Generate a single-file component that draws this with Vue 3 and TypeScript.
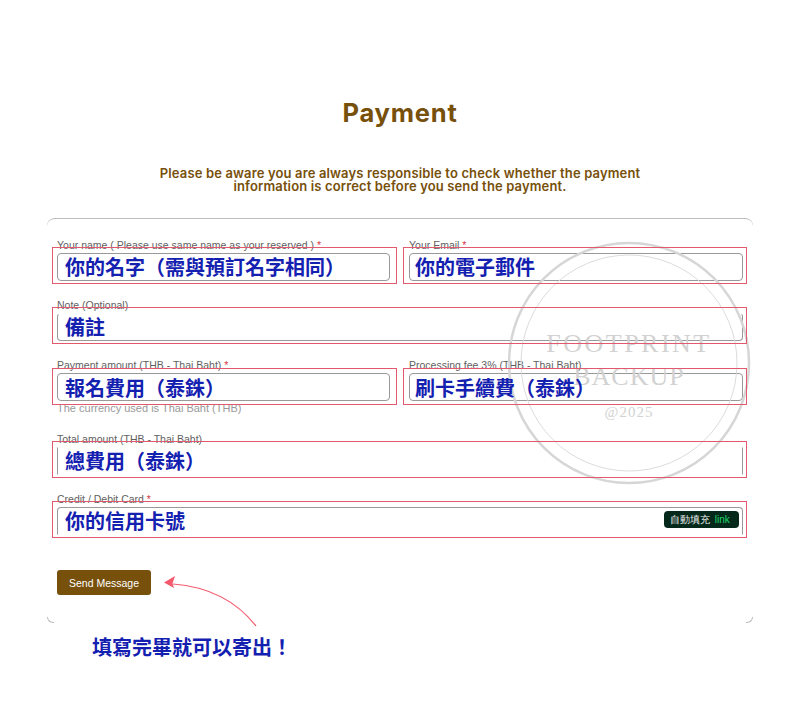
<script setup lang="ts">
type Field = {
  label: string;
  required?: boolean;
  hint: string;
  wide?: boolean;
  side?: 'left' | 'right';
  low?: boolean;
  borders?: string;
  help?: string;
  badge?: boolean;
};

const fields: Field[] = [
  { label: 'Your name ( Please use same name as your reserved )', required: true, hint: '你的名字（需與預訂名字相同）', side: 'left' },
  { label: 'Your Email', required: true, hint: '你的電子郵件', side: 'right' },
  { label: 'Note (Optional)', hint: '備註', wide: true, borders: 'no-top' },
  { label: 'Payment amount (THB - Thai Baht)', required: true, hint: '報名費用（泰銖）', side: 'left', low: true, help: 'The currency used is Thai Baht (THB)' },
  { label: 'Processing fee 3% (THB - Thai Baht)', hint: '刷卡手續費（泰銖）', side: 'right', low: true },
  { label: 'Total amount (THB - Thai Baht)', hint: '總費用（泰銖）', wide: true, borders: 'sides-only' },
  { label: 'Credit / Debit Card', required: true, hint: '你的信用卡號', wide: true, borders: 'no-bottom', badge: true },
];
</script>

<template>
  <div class="page">
    <h1>Payment</h1>
    <p class="notice">
      Please be aware you are always responsible to check whether the payment<br />
      information is correct before you send the payment.
    </p>

    <form class="card" @submit.prevent>
      <span class="corner corner-left"></span>
      <span class="corner corner-right"></span>

      <div class="grid">
        <div v-for="field in fields" :key="field.label" class="field" :class="{ wide: field.wide }">
          <label>{{ field.label }}<span v-if="field.required" class="req"> *</span></label>
          <div class="control">
            <input type="text" :class="field.borders" />
            <div class="annot" :class="[field.side, { low: field.low }]">{{ field.hint }}</div>
            <div v-if="field.badge" class="badge">自動填充 <span>link</span></div>
          </div>
          <small v-if="field.help">{{ field.help }}</small>
        </div>
      </div>

      <button type="submit">Send Message</button>
    </form>

    <p class="tip">填寫完畢就可以寄出！</p>

    <svg class="arrow" width="110" height="60" viewBox="0 0 110 60" fill="none">
      <path d="M101 51C83 28 57 12 18 9" stroke="#f4596c" stroke-width="1.2" />
      <path d="M9 7.500L20 1L17.500 8.500L19 13Z" fill="#f4596c" />
    </svg>

    <svg class="stamp" width="250" height="250" viewBox="0 0 250 250" fill="none">
      <circle cx="125" cy="125" r="120" stroke="#d6d6d6" stroke-width="2.500" />
      <circle cx="125" cy="125" r="108" stroke="#dcdcdc" stroke-width="1" />
      <text x="125" y="114" class="stamp-big">FOOTPRINT</text>
      <text x="125" y="147" class="stamp-big backup">BACKUP</text>
      <text x="125" y="179" class="stamp-small">@2025</text>
    </svg>
  </div>
</template>

<style scoped>
.page {
  position: relative;
  width: 800px;
  height: 725px;
  padding-top: 98px;
  box-sizing: border-box;
  overflow: hidden;
  font-family: "Liberation Sans", Arial, sans-serif;
}

h1 {
  margin: 0;
  text-align: center;
  font-family: Inter, sans-serif;
  font-size: 25.500px;
  line-height: 30px;
  font-weight: 700;
  letter-spacing: 0.800px;
  color: #77500b;
}

.notice {
  margin: 39px 0 0;
  text-align: center;
  font-family: Inter, sans-serif;
  font-size: 13px;
  line-height: 13px;
  font-weight: 600;
  letter-spacing: 0.140px;
  color: #77500b;
}

.card {
  position: relative;
  margin: 25px 47px 0;
  padding: 20px 10px 28px;
  border-top: 1px solid #bdbdbd;
  border-radius: 8px 8px 0 0;
}

.corner {
  position: absolute;
  bottom: 0;
  width: 6px;
  height: 5px;
  border-bottom: 1px solid #bdbdbd;
}

.corner-left {
  left: 0;
  border-left: 1px solid #bdbdbd;
  border-bottom-left-radius: 6px;
}

.corner-right {
  right: 0;
  border-right: 1px solid #bdbdbd;
  border-bottom-right-radius: 6px;
}

.grid {
  display: grid;
  grid-template-columns: 333px 334px;
  column-gap: 19px;
  row-gap: 18px;
}

.field.wide {
  grid-column: 1 / -1;
}

label {
  display: block;
  height: 12px;
  margin-bottom: 2px;
  font-size: 10.500px;
  line-height: 12px;
  font-weight: 400;
  color: #5f5f5f;
  white-space: nowrap;
}

.req {
  color: #d9364a;
}

.control {
  position: relative;
  height: 28px;
}

input {
  display: block;
  width: 100%;
  height: 100%;
  box-sizing: border-box;
  margin: 0;
  padding: 0;
  border: 1px solid #999;
  border-radius: 4px;
  background: #fff;
}

input.no-top {
  border-top-color: transparent;
}

input.sides-only {
  border-top-color: transparent;
  border-bottom-color: transparent;
  border-radius: 0;
}

input.no-bottom {
  border-bottom-color: transparent;
  border-radius: 4px 4px 0 0;
}

.annot {
  position: absolute;
  z-index: 2;
  top: -6px;
  bottom: -3px;
  left: -5px;
  right: -4px;
  display: flex;
  align-items: center;
  padding: 2px 0 0 12px;
  box-sizing: border-box;
  border: 1px solid #e0596c;
  font-family: "Noto Sans CJK TC", sans-serif;
  font-size: 20px;
  font-weight: 700;
  color: #1420b0;
  white-space: nowrap;
}

.annot.left {
  right: -7px;
}

.annot.right {
  left: -6px;
  padding-left: 11px;
}

.annot.low {
  top: -5px;
  bottom: -4px;
}

.badge {
  position: absolute;
  z-index: 2;
  top: 4px;
  right: 4px;
  width: 75px;
  height: 17px;
  box-sizing: border-box;
  padding-left: 6px;
  border-radius: 4px;
  background: #04291a;
  font-size: 10px;
  line-height: 17px;
  color: #f0f0f0;
  white-space: nowrap;
}

.badge span {
  margin-left: 2px;
  color: #1fd66a;
}

small {
  display: block;
  height: 12px;
  margin-top: 1px;
  font-size: 11px;
  line-height: 12px;
  color: #999;
}

.field:has(small) {
  margin-bottom: 1px;
}

button {
  display: block;
  width: 94px;
  height: 25px;
  margin-top: 35px;
  padding: 0;
  border: 0;
  border-radius: 3px;
  background: #77500b;
  color: #fff;
  font-family: inherit;
  font-size: 10.500px;
}

.tip {
  margin: 9px 0 0 92px;
  font-family: "Noto Sans CJK TC", sans-serif;
  font-size: 20px;
  line-height: 30px;
  font-weight: 700;
  color: #1420b0;
}

.arrow {
  position: absolute;
  left: 155px;
  top: 575px;
}

.stamp {
  position: absolute;
  z-index: 1;
  left: 504px;
  top: 238px;
  pointer-events: none;
}

.stamp-big {
  font-family: "Liberation Serif", serif;
  font-size: 26px;
  letter-spacing: 2.500px;
  text-anchor: middle;
  fill: #d2d2d2;
}

.stamp-big.backup {
  letter-spacing: 1px;
}

.stamp-small {
  font-family: "Liberation Serif", serif;
  font-size: 15px;
  letter-spacing: 1px;
  text-anchor: middle;
  fill: #d2d2d2;
}
</style>

<style>
html,
body {
  background: #fff;
}
</style>
